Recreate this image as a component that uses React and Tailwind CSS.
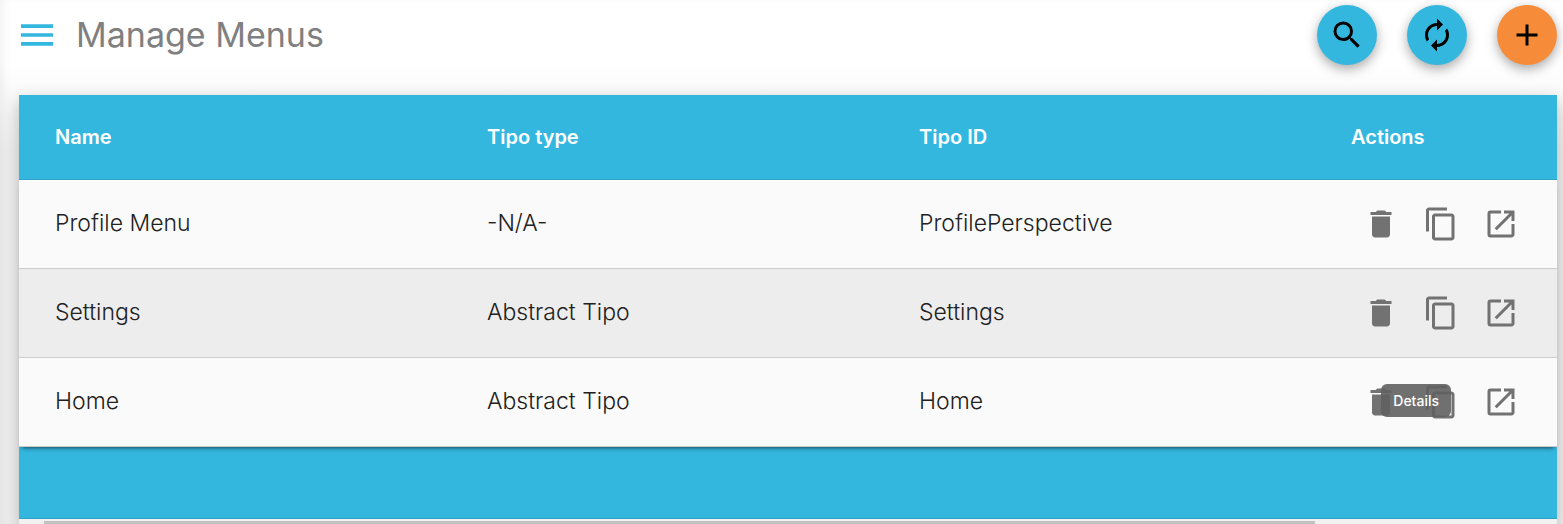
import {
  MdAdd,
  MdAutorenew,
  MdContentCopy,
  MdDelete,
  MdOpenInNew,
  MdSearch,
} from "react-icons/md";

const rows = [
  { name: "Profile Menu", type: "-N/A-", id: "ProfilePerspective" },
  { name: "Settings", type: "Abstract Tipo", id: "Settings" },
  { name: "Home", type: "Abstract Tipo", id: "Home", tooltip: "Details" },
];

const fabClass =
  "flex size-[60px] items-center justify-center rounded-full text-black shadow-[0_4px_12px_rgba(0,0,0,0.35)]";
const actionClass = "flex size-[60px] items-center justify-center";

function MenuIcon() {
  return (
    <svg width="32" height="22" viewBox="0 0 32 22" fill="currentColor" aria-hidden="true">
      <path d="M0 0.3h32v3.6H0zM0 9.2h32v3.6H0zM0 18.1h32v3.6H0z" />
    </svg>
  );
}

function Toolbar() {
  return (
    <header className="flex items-center justify-between pt-[5px] pr-1.5 pl-[21px]">
      <div className="flex items-center gap-[23px]">
        <button type="button" aria-label="Open menu" className="text-[#34b7df]">
          <MenuIcon />
        </button>
        <h1 className="text-[34px] leading-10 text-[#808080]">Manage Menus</h1>
      </div>
      <div className="flex gap-[30px]">
        <button type="button" aria-label="Search" className={`${fabClass} bg-[#34b7df]`}>
          <MdSearch size={36} />
        </button>
        <button type="button" aria-label="Refresh" className={`${fabClass} bg-[#34b7df]`}>
          <MdAutorenew size={36} />
        </button>
        <button type="button" aria-label="Add menu" className={`${fabClass} bg-[#f68b39]`}>
          <MdAdd size={36} />
        </button>
      </div>
    </header>
  );
}

function RowActions({ row }) {
  return (
    <div className="relative flex w-[180px] text-[#727272]">
      <button type="button" aria-label={`Delete ${row.name}`} className={actionClass}>
        <MdDelete size={36} />
      </button>
      <button type="button" aria-label={`Copy ${row.name}`} className={actionClass}>
        <MdContentCopy size={36} />
      </button>
      <button type="button" aria-label={`Open ${row.name}`} className={actionClass}>
        <MdOpenInNew size={36} />
      </button>
      {row.tooltip && (
        <span
          role="tooltip"
          className="absolute top-3 right-20 rounded-md bg-[#616161]/90 px-3 text-sm leading-[33px] font-medium text-white"
        >
          {row.tooltip}
        </span>
      )}
    </div>
  );
}

export default function App() {
  return (
    <div className="overflow-hidden bg-[linear-gradient(to_bottom,#ffffff_64px,#f0f0f0_150px)] font-['Inter','Noto_Sans',sans-serif]">
      <div className="shadow-[inset_10px_2px_10px_-6px_rgba(0,0,0,0.05)]">
        <Toolbar />
        <main className="pt-[30px] pr-1.5 pl-[19px]">
          <div className="bg-[#34b7df] shadow-[0_6px_16px_rgba(0,0,0,0.25)]">
            <table className="w-full table-fixed border-collapse text-left">
              <thead>
                <tr className="h-[84px] border-b border-[#2ea3c7] text-xl text-white">
                  <th className="pl-9 font-semibold">Name</th>
                  <th className="pl-9 font-semibold">Tipo type</th>
                  <th className="pl-9 font-semibold">Tipo ID</th>
                  <th className="w-[242px] pl-9 font-semibold">Actions</th>
                </tr>
              </thead>
              <tbody className="text-[23px] font-light text-[#212121] shadow-[0_5px_4px_-3px_rgba(0,0,0,0.6)]">
                {rows.map((row) => (
                  <tr
                    key={row.name}
                    className="h-[89px] border-b border-[#cccccc] bg-[#fafafa] even:bg-[#ededed]"
                  >
                    <td className="pl-9">{row.name}</td>
                    <td className="pl-9">{row.type}</td>
                    <td className="pl-9">{row.id}</td>
                    <td className="pl-9">
                      <RowActions row={row} />
                    </td>
                  </tr>
                ))}
              </tbody>
            </table>
            <div className="h-[72px] border-b border-[#2ea3c7]" />
            <div className="bg-[#f1f1f1] pt-0.5 pr-[242px] pl-[25px]">
              <div className="h-[3px] bg-[#c1c1c1]" />
            </div>
          </div>
        </main>
      </div>
    </div>
  );
}
